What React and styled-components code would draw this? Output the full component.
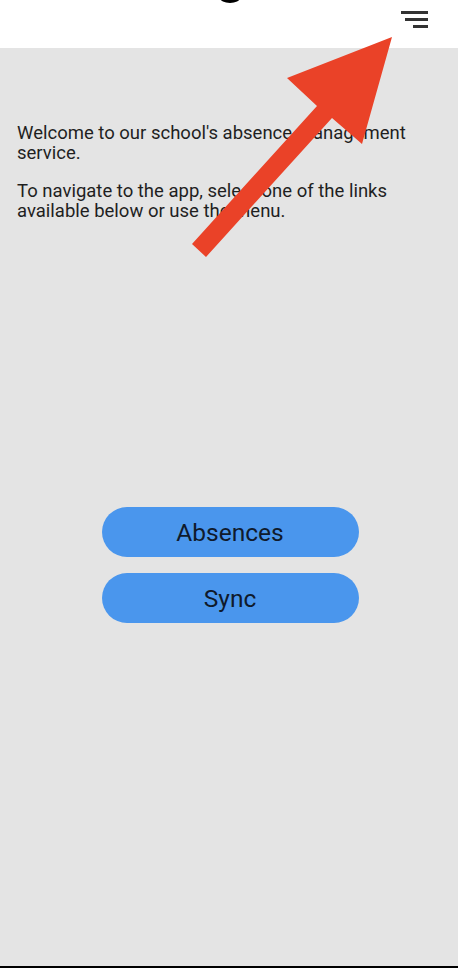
import React from 'react';
import styled, { createGlobalStyle } from 'styled-components';

const GlobalStyle = createGlobalStyle`
  html, body {
    margin: 0;
    padding: 0;
    background: #e4e4e4;
  }
  body {
    font-family: Roboto, "Liberation Sans", sans-serif;
  }
`;

const Screen = styled.div`
  position: relative;
  display: flex;
  flex-direction: column;
  height: 968px;
  box-sizing: border-box;
  border-bottom: 2px solid #000;
  overflow: hidden;
`;

const Header = styled.header`
  position: relative;
  display: flex;
  justify-content: flex-end;
  align-items: flex-start;
  height: 48px;
  padding: 11px 30px 0 0;
  box-sizing: border-box;
  background: #fff;
`;

const Notch = styled.div`
  position: absolute;
  left: 220px;
  top: -7px;
  width: 20px;
  height: 10px;
  border-radius: 50%;
  background: #000;
`;

const MenuButton = styled.button`
  display: flex;
  flex-direction: column;
  align-items: flex-end;
  gap: 4.5px;
  width: 27px;
  padding: 0;
  border: 0;
  background: none;
`;

const MenuLine = styled.span`
  display: block;
  height: 2.5px;
  width: ${p => p.w}px;
  background: #333;
`;

const Body = styled.main`
  flex: 1;
  display: flex;
  flex-direction: column;
  padding: 75px 17px 0;
  background: #e4e4e4;
`;

const Paragraph = styled.p`
  margin: 0 0 18px;
  font-size: 18.5px;
  line-height: 20px;
  color: #1f1f1f;
`;

const Links = styled.nav`
  display: flex;
  flex-direction: column;
  align-items: center;
  gap: 16px;
  margin-top: 268px;
  padding-left: 2px;
`;

const LinkButton = styled.button`
  width: 257px;
  height: 50px;
  border: 0;
  border-radius: 25px;
  background: #4a96ed;
  color: #0f1a2c;
  font-family: Roboto, "Liberation Sans", sans-serif;
  font-size: 24.5px;
`;

const Arrow = styled.svg`
  position: absolute;
  left: 0;
  top: 0;
  pointer-events: none;
`;

export default function App() {
  return (
    <>
      <GlobalStyle />
      <Screen>
        <Header>
          <Notch />
          <MenuButton aria-label="menu">
            <MenuLine w={27} />
            <MenuLine w={23} />
            <MenuLine w={15} />
          </MenuButton>
        </Header>
        <Body>
          <Paragraph>Welcome to our school's absence management service.</Paragraph>
          <Paragraph>To navigate to the app, select one of the links available below or use the menu.</Paragraph>
          <Links>
            <LinkButton>Absences</LinkButton>
            <LinkButton>Sync</LinkButton>
          </Links>
        </Body>
        <Arrow width="458" height="300" viewBox="0 0 458 300">
          <polygon
            points="392,37 287,78 317,106 192,244 206,257 332,118 362,144"
            fill="#ea4228"
          />
        </Arrow>
      </Screen>
    </>
  );
}
